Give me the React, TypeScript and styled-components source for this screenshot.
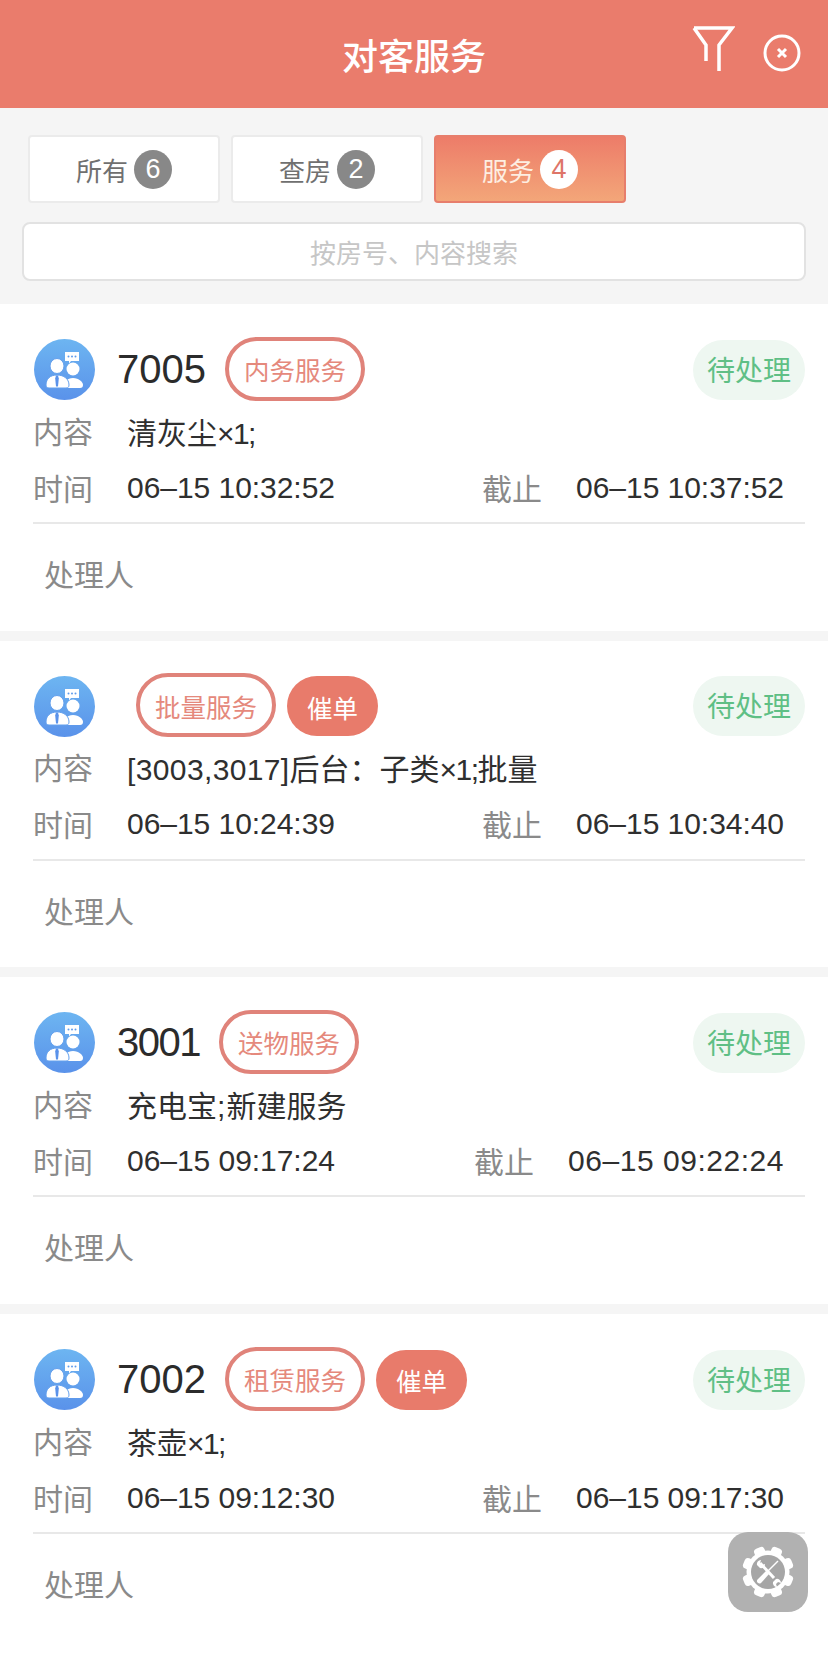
import React from 'react';
import styled, { createGlobalStyle } from 'styled-components';

const GlobalStyle = createGlobalStyle`
  html, body {
    margin: 0;
    padding: 0;
    height: 100%;
    overflow: hidden;
    background: #f5f5f5;
  }
  body {
    font-family: "Liberation Sans", "Noto Sans CJK SC", sans-serif;
  }
  #root {
    height: 100%;
  }
`;

const Page = styled.div`
  display: flex;
  flex-direction: column;
  height: 1659px;
  overflow: hidden;
  position: relative;
`;

const Header = styled.header`
  display: grid;
  grid-template-columns: 1fr auto 1fr;
  align-items: center;
  height: 108px;
  flex: none;
  background: #ea7c6c;
  color: #fff;
`;

const Title = styled.h1`
  grid-column: 2;
  margin: 8px 0 0;
  font-size: 36px;
  font-weight: 500;
  line-height: 1;
`;

const Actions = styled.div`
  grid-column: 3;
  justify-self: end;
  display: flex;
  align-items: flex-start;
  gap: 28px;
  padding-right: 27px;
  height: 108px;
`;

const FilterIcon = styled.svg`
  width: 44px;
  height: 50px;
  margin-top: 24px;
`;

const CloseIcon = styled.svg`
  width: 38px;
  height: 38px;
  margin-top: 34px;
`;

const Toolbar = styled.div`
  flex: none;
  display: flex;
  flex-direction: column;
  height: 196px;
  box-sizing: border-box;
  padding: 27px 22px 0;
`;

const Tabs = styled.div`
  display: flex;
  gap: 11px;
  padding-left: 6px;
`;

const Tab = styled.div<{ $active?: boolean }>`
  display: flex;
  align-items: center;
  justify-content: center;
  gap: 6px;
  width: 192px;
  height: 68px;
  box-sizing: border-box;
  border-radius: 4px;
  font-size: 26px;
  border: 2px solid ${p => (p.$active ? '#e77e6c' : '#ebebeb')};
  color: ${p => (p.$active ? '#fdeee2' : '#707070')};
  background: ${p => (p.$active ? 'linear-gradient(#ed7c69, #f3a679)' : '#fff')};
`;

const Badge = styled.span<{ $active?: boolean }>`
  display: flex;
  align-items: center;
  justify-content: center;
  width: 38px;
  height: 39px;
  border-radius: 50%;
  font-size: 27px;
  background: ${p => (p.$active ? '#fff' : '#888')};
  color: ${p => (p.$active ? '#de7568' : '#fff')};
`;

const Search = styled.div`
  display: flex;
  align-items: center;
  justify-content: center;
  height: 59px;
  box-sizing: border-box;
  margin-top: 19px;
  background: #fff;
  border: 2px solid #e2e2e2;
  border-radius: 8px;
  font-size: 26px;
  color: #c6c6c6;
`;

const List = styled.div`
  flex: 1;
  display: flex;
  flex-direction: column;
  gap: 10px;
`;

const Card = styled.article`
  flex: none;
  height: 326.7px;
  box-sizing: border-box;
  padding: 35px 23px 0 33px;
  background: #fff;

  &:last-child {
    flex: 1;
  }
`;

const TopRow = styled.div`
  display: flex;
  align-items: center;
  height: 61px;
  margin-bottom: 2px;
`;

const Avatar = styled.svg`
  width: 61px;
  height: 61px;
  flex: none;
  margin-left: 1px;
`;

const Room = styled.span`
  margin: 0 19px 0 22px;
  font-size: 40px;
  color: #2b2b2b;
`;

const Tag = styled.span`
  display: flex;
  align-items: center;
  height: 64px;
  box-sizing: border-box;
  margin-bottom: 2px;
  padding: 0 15px;
  border: 4px solid #e0837a;
  border-radius: 32px;
  font-size: 25.5px;
  color: #e5897c;
  background: #fff;
`;

const Urge = styled.span`
  display: flex;
  align-items: center;
  justify-content: center;
  width: 91px;
  height: 60px;
  margin-left: 11px;
  border-radius: 30px;
  font-size: 25.5px;
  color: #fff;
  background: #e87b6b;
`;

const Status = styled.span`
  display: flex;
  align-items: center;
  justify-content: center;
  width: 112px;
  height: 58px;
  margin-left: auto;
  padding-bottom: 2px;
  border-radius: 30px;
  font-size: 28px;
  color: #5fbf85;
  background: #eef7f1;
`;

const InfoRow = styled.div`
  display: flex;
  align-items: center;
  justify-content: space-between;
  height: 57px;
`;

const Field = styled.div`
  display: flex;
  align-items: center;
  gap: 34px;
`;

const Label = styled.span`
  margin-bottom: 2px;
  font-size: 30px;
  color: #8a8a8a;
  white-space: nowrap;
`;

const Value = styled.span`
  font-size: 30px;
  color: #2f2f2f;
  white-space: nowrap;
`;

const EndField = styled(Field)`
  padding-right: 21px;
`;

const Footer = styled.div`
  margin-top: 6px;
  padding: 0 0 6px 11px;
  height: 106px;
  box-sizing: border-box;
  display: flex;
  align-items: center;
  border-top: 2px solid #e8e8e8;
  font-size: 30px;
  color: #8a8a8a;
`;

const ToolButton = styled.button`
  position: absolute;
  left: 728px;
  top: 1532px;
  display: flex;
  align-items: center;
  justify-content: center;
  width: 80px;
  height: 80px;
  padding: 0;
  border: none;
  border-radius: 20px;
  background: #b1b1b1;
`;

const PersonIcon = () => (
  <Avatar viewBox="0 0 61 61">
    <defs>
      <linearGradient id="avatarFill" x1="0" y1="0" x2="0" y2="1">
        <stop offset="0" stopColor="#6db5f1" />
        <stop offset="1" stopColor="#5a92ea" />
      </linearGradient>
    </defs>
    <circle cx="30.5" cy="30.5" r="30.5" fill="url(#avatarFill)" />
    <path d="M31 13h14v9h-8l-2 2.500V22h-4z" fill="#fff" />
    <circle cx="34.500" cy="17.500" r="1" fill="#5f9cec" />
    <circle cx="38" cy="17.500" r="1" fill="#5f9cec" />
    <circle cx="41.500" cy="17.500" r="1" fill="#5f9cec" />
    <ellipse cx="39" cy="30" rx="6.500" ry="6.500" fill="#fff" />
    <path d="M30 49c0-6 3-10 9-10s10 4 10 7c0 2-1 3-3 3z" fill="#fff" />
    <ellipse cx="23" cy="27" rx="7" ry="7.500" fill="#fff" stroke="#629fed" strokeWidth="1" />
    <path d="M15 49c-2 0-3-1-3-3 0-6 4-10 11-10s12 4 12 10c0 2-1 3-3 3z" fill="#fff" stroke="#629fed" strokeWidth="1" />
    <path d="M22 36.500h2l.8 3-.8 8h-2l-.8-8z" fill="#5a92ea" />
  </Avatar>
);

const GearIcon = () => (
  <svg width="52" height="52" viewBox="-26 -26 52 52">
    {[0, 45, 90, 135, 180, 225, 270, 315].map(a => (
      <rect key={a} x="-5.500" y="-26" width="11" height="10" rx="3.500" fill="#fff" transform={`rotate(${a + 22.5})`} />
    ))}
    <circle r="21.500" fill="#fff" />
    <circle r="17" fill="#a6a6a6" />
    <path d="M-8-9l14 15" stroke="#fff" strokeWidth="3" />
    <path d="M-11-7a4 4 0 0 1 4-5l-1 3 2 2 3-1a4 4 0 0 1-5 4z" fill="#fff" />
    <path d="M8 7a4 4 0 0 1 5 4l-3-1-2 2 1 3a4 4 0 0 1-4-5z" fill="#fff" />
    <path d="M10-11L-2 1" stroke="#fff" strokeWidth="1.500" />
    <path d="M-2-1l3 3-8 9a2.500 2.500 0 0 1-3.500-3.500z" fill="#fff" />
  </svg>
);

// the reference font has a much narrower "1" than the other digits,
// so each latin run gets a spacing worked out from how many ones it holds
const spacingFor = (run: string, base: number, perOne: number) => {
  const ones = run.split('1').length - 1;
  return `${base - (perOne * ones) / run.length}px`;
};

const formatText = (text: string) =>
  text.split(/([\x20-\x7e×–]+)/).map((part, i) =>
    i % 2 === 0 ? (
      part
    ) : (
      <span key={i} style={{ letterSpacing: spacingFor(part, 1.1, 8) }}>
        {part}
      </span>
    ),
  );

interface Order {
  room: string;
  tag: string;
  urge?: boolean;
  content: string;
  start: string;
  end: string;
}

const orders: Order[] = [
  { room: '7005', tag: '内务服务', content: '清灰尘×1;', start: '06–15 10:32:52', end: '06–15 10:37:52' },
  { room: '', tag: '批量服务', urge: true, content: '[3003,3017]后台：子类×1;批量', start: '06–15 10:24:39', end: '06–15 10:34:40' },
  { room: '3001', tag: '送物服务', content: '充电宝;新建服务', start: '06–15 09:17:24', end: '06–15 09:22:24' },
  { room: '7002', tag: '租赁服务', urge: true, content: '茶壶×1;', start: '06–15 09:12:30', end: '06–15 09:17:30' },
];

const tabs = [
  { name: '所有', count: 6 },
  { name: '查房', count: 2 },
  { name: '服务', count: 4, active: true },
];

const App: React.FC = () => {
  return (
    <Page>
      <GlobalStyle />
      <Header>
        <Title>对客服务</Title>
        <Actions>
          <FilterIcon viewBox="0 0 44 50" fill="none" stroke="#fff" strokeWidth="3.5">
            <path d="M3 4h38L28 21v26" />
            <path d="M3 4l12 17v16" />
          </FilterIcon>
          <CloseIcon viewBox="0 0 38 38" fill="none" stroke="#fff" strokeWidth="3">
            <circle cx="19" cy="19" r="17" />
            <path d="M15 15l8 8M23 15l-8 8" />
          </CloseIcon>
        </Actions>
      </Header>
      <Toolbar>
        <Tabs>
          {tabs.map(tab => (
            <Tab key={tab.name} $active={tab.active}>
              {tab.name}
              <Badge $active={tab.active}>{tab.count}</Badge>
            </Tab>
          ))}
        </Tabs>
        <Search>按房号、内容搜索</Search>
      </Toolbar>
      <List>
        {orders.map((order, index) => (
          <Card key={index}>
            <TopRow>
              <PersonIcon />
              <Room style={{ letterSpacing: spacingFor(order.room, 0, 6) }}>{order.room}</Room>
              <Tag>{order.tag}</Tag>
              {order.urge && <Urge>催单</Urge>}
              <Status>待处理</Status>
            </TopRow>
            <InfoRow>
              <Field>
                <Label>内容</Label>
                <Value>{formatText(order.content)}</Value>
              </Field>
            </InfoRow>
            <InfoRow>
              <Field>
                <Label>时间</Label>
                <Value>{formatText(order.start)}</Value>
              </Field>
              <EndField>
                <Label>截止</Label>
                <Value>{formatText(order.end)}</Value>
              </EndField>
            </InfoRow>
            <Footer>处理人</Footer>
          </Card>
        ))}
      </List>
      <ToolButton>
        <GearIcon />
      </ToolButton>
    </Page>
  );
};

export default App;
